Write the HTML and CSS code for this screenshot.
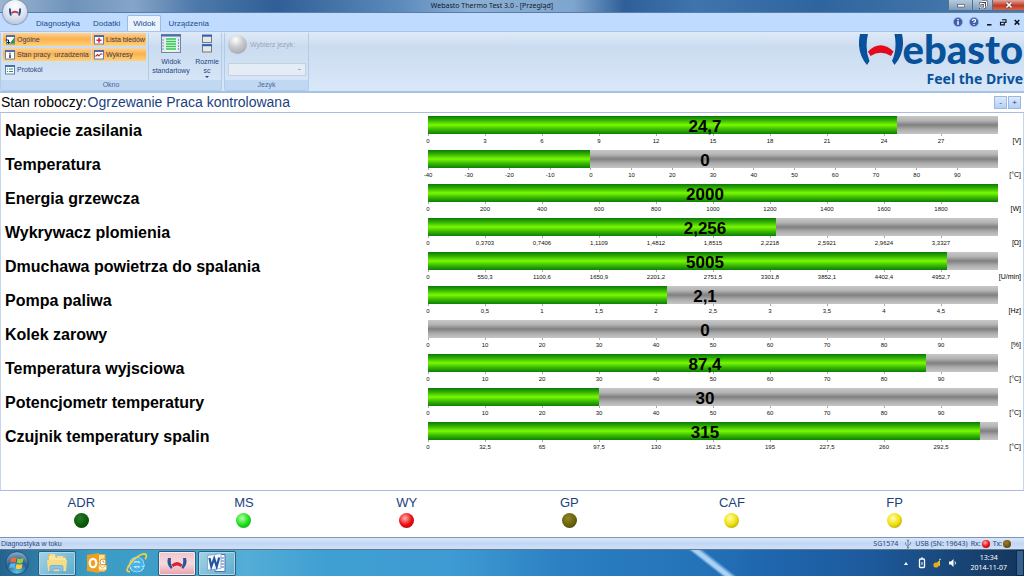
FILE: index.html
```html
<!DOCTYPE html>
<html lang="pl">
<head>
<meta charset="utf-8">
<meta name="viewport" content="width=device-width, initial-scale=1">
<title>Webasto Thermo Test 3.0 - [Przegląd]</title>
<link rel="stylesheet" href="styles.css">
</head>
<body>
<header class="titlebar">
  <h1 class="window-title">Webasto Thermo Test 3.0 - [Przegląd]</h1>
  <div class="window-buttons">
    <button class="win-btn" aria-label="Minimalizuj"><svg viewBox="0 0 12 10" width="12" height="10"><rect x="2.500" y="4.500" width="7" height="2.500" fill="#fff" stroke="#445" stroke-width=".6"/></svg></button>
    <button class="win-btn" aria-label="Przywróć"><svg viewBox="0 0 12 10" width="12" height="10"><path d="M5 1.500h4.500v4.500M3 3.500h4.500v4.500H3z" fill="none" stroke="#445" stroke-width="2"/><path d="M5 1.500h4.500v4.500M3 3.500h4.500v4.500H3z" fill="none" stroke="#fff" stroke-width="1"/></svg></button>
    <button class="win-btn win-close" aria-label="Zamknij"><svg viewBox="0 0 12 10" width="12" height="10"><path d="M3.500 2.500l5 5M8.500 2.500l-5 5" stroke="#533" stroke-width="2.800"/><path d="M3.500 2.500l5 5M8.500 2.500l-5 5" stroke="#fff" stroke-width="1.700"/></svg></button>
  </div>
</header>
<button class="app-orb" aria-label="Menu"><svg viewBox="0 0 24 24" width="24" height="24"><path d="M7 8.500q-.5 3.500 1 7M17 8.500q.5 3.500-1 7" fill="none" stroke="#274a86" stroke-width="1.900"/><path d="M8.500 13q3.500-2.600 7 0" fill="none" stroke="#c9373f" stroke-width="2"/></svg></button>
<nav class="tabs">
  <button class="tab">Diagnostyka</button>
  <button class="tab">Dodatki</button>
  <button class="tab tab-active">Widok</button>
  <button class="tab">Urządzenia</button>
  <div class="tab-tools">
    <button class="tool" aria-label="Informacje"><svg viewBox="0 0 10 10" width="10" height="10"><circle cx="5" cy="5" r="4.600" fill="#3d5eae" stroke="#9db2dd" stroke-width=".8"/><path d="M5 4.200v3.600M5 1.900v1.400" stroke="#fff" stroke-width="1.500"/></svg></button>
    <button class="tool" aria-label="Pomoc"><svg viewBox="0 0 10 10" width="10" height="10"><circle cx="5" cy="5" r="4.600" fill="#3d5eae" stroke="#9db2dd" stroke-width=".8"/><path d="M3.400 3.900q0-1.600 1.600-1.600t1.600 1.400q0 .9-1.600 1.700v.6M5 6.900v1.200" fill="none" stroke="#fff" stroke-width="1.200"/></svg></button>
    <button class="tool" aria-label="Minimalizuj okno"><svg viewBox="0 0 8 8" width="8" height="8"><path d="M2 6.800h4.500" stroke="#111" stroke-width="1.500"/></svg></button>
    <button class="tool" aria-label="Przywróć okno"><svg viewBox="0 0 8 8" width="8" height="8"><path d="M3 1.700h4v2.800H6M1.500 4.200h3.800v2.700H1.500z" fill="none" stroke="#111" stroke-width="1.100"/></svg></button>
    <button class="tool" aria-label="Zamknij okno"><svg viewBox="0 0 8 8" width="8" height="8"><path d="M1.700 2l4.600 4.600M6.300 2L1.700 6.600" stroke="#111" stroke-width="1.500"/></svg></button>
  </div>
</nav>
<section class="ribbon">
  <div class="group">
    <div class="group-body">
      <div class="toggles">
        <button class="toggle toggle-on"><svg viewBox="0 0 10 10" width="10" height="10"><rect x="1.500" y=".5" width="8" height="8.500" fill="#fff" stroke="#6580b0"/><path d="M1 1.200h9" stroke="#3b63b5" stroke-width="1.500"/><path d="M4.500 8.500L9 3v5.500z" fill="#299a35"/><path d="M.5 5h3v3.500M2 7l1.500 1.500L5 7" stroke="#123" fill="none"/></svg>Ogólne</button>
        <button class="toggle toggle-on"><svg viewBox="0 0 10 10" width="10" height="10"><rect x=".5" y=".5" width="9" height="8.500" fill="#fff" stroke="#6580b0"/><path d="M0 1.200h10" stroke="#3b63b5" stroke-width="1.500"/><path d="M5 2.800v5M2.500 5.300h5" stroke="#d1272d" stroke-width="1.500"/></svg>Lista bledów</button>
        <button class="toggle toggle-on"><svg viewBox="0 0 10 10" width="10" height="10"><rect x=".5" y=".5" width="9" height="8.500" fill="#fff" stroke="#6580b0"/><path d="M0 1.200h10" stroke="#3b63b5" stroke-width="1.500"/><path d="M5 4.500v3.500M5 2.700v1" stroke="#123" stroke-width="1.400"/></svg>Stan pracy&nbsp; urzadzenia</button>
        <button class="toggle toggle-on"><svg viewBox="0 0 10 10" width="10" height="10"><rect x=".5" y=".5" width="9" height="8.500" fill="#fff" stroke="#6580b0"/><path d="M0 1.200h10" stroke="#3b63b5" stroke-width="1.500"/><path d="M1.500 6.500l2-2 1.500 1.500 1.500-2 2 0" stroke="#c1272d" fill="none" stroke-width="1.100"/></svg>Wykresy</button>
        <button class="toggle"><svg viewBox="0 0 10 10" width="10" height="10"><rect x=".5" y=".5" width="9" height="8.500" fill="#fff" stroke="#6580b0"/><path d="M0 1.200h10" stroke="#3b63b5" stroke-width="1.500"/><path d="M2 4h1M4 4h4M2 6.500h1M4 6.500h4" stroke="#299a55"/></svg>Protokól</button>
      </div>
      <button class="big-btn"><svg viewBox="0 0 20 19" width="20" height="19"><rect x=".5" y=".5" width="19" height="18" fill="#dfe8f4" stroke="#7587a5"/><path d="M0 1.500h20" stroke="#4b6dad" stroke-width="2"/><rect x="4.500" y="3.500" width="11" height="14" fill="#e9fbe9"/><path d="M5 5h10M5 7.500h10M5 10h10M5 12.500h10M5 15h10" stroke="#35c455" stroke-width="1.700"/><path d="M2 5v11M17.500 5v11" stroke="#8c99ae" stroke-dasharray="2 1"/></svg><span>Widok<br>standartowy</span></button>
      <button class="big-btn big-btn-narrow"><svg viewBox="0 0 12 19" width="12" height="19"><rect x="1.500" y="1" width="9" height="7.500" fill="#e8e9dc" stroke="#6c7a94"/><path d="M1 1.800h10" stroke="#2f5fc0" stroke-width="1.800"/><rect x="1.500" y="10.500" width="9" height="7.500" fill="#e8e9dc" stroke="#6c7a94"/><path d="M1 11.300h10" stroke="#2f5fc0" stroke-width="1.800"/></svg><span>Rozmie<br>sc</span><i class="arrow"></i></button>
    </div>
    <div class="group-title">Okno</div>
  </div>
  <div class="group">
    <div class="group-body lang-body">
      <label class="lang-label" for="lang"><span class="globe"></span>Wybierz jezyk:</label>
      <select class="lang-select" id="lang" disabled><option></option></select>
    </div>
    <div class="group-title">Jezyk</div>
  </div>
  <div class="brand">
    <div class="brand-name"><svg viewBox="0 0 44 34" width="44" height="34"><path d="M1 1H9Q5.500 16 10.500 28L8 32Q-3 19 1 1zM35.500 1H43Q47 19 35.500 32L33 28Q38.500 16 35.500 1z" fill="#08529c"/><path d="M9 18.500Q21.500 6 34.500 18.500L32 23Q21.500 16.500 11.500 23z" fill="#e5091d"/></svg><span>ebasto</span></div>
    <div class="brand-claim">Feel the Drive</div>
  </div>
</section>
<div class="state">
  <p class="state-text"><span>Stan roboczy:</span><span class="state-value">Ogrzewanie Praca kontrolowana</span></p>
  <div class="zoom-buttons"><button class="zoom-btn">-</button><button class="zoom-btn">+</button></div>
</div>
<main class="gauges">
  <div class="gauge"><span class="name">Napiecie zasilania</span><div><div class="bar"><div class="fill" style="width:82.3%"></div><span class="value">24,7</span></div><div class="scale"><span>0</span><span>3</span><span>6</span><span>9</span><span>12</span><span>15</span><span>18</span><span>21</span><span>24</span><span>27</span></div></div><span class="unit">[V]</span></div>
  <div class="gauge"><span class="name">Temperatura</span><div><div class="bar"><div class="fill" style="width:28.5%"></div><span class="value">0</span></div><div class="scale scale-14"><span>-40</span><span>-30</span><span>-20</span><span>-10</span><span>0</span><span>10</span><span>20</span><span>30</span><span>40</span><span>50</span><span>60</span><span>70</span><span>80</span><span>90</span></div></div><span class="unit">[°C]</span></div>
  <div class="gauge"><span class="name">Energia grzewcza</span><div><div class="bar"><div class="fill" style="width:100%"></div><span class="value">2000</span></div><div class="scale"><span>0</span><span>200</span><span>400</span><span>600</span><span>800</span><span>1000</span><span>1200</span><span>1400</span><span>1600</span><span>1800</span></div></div><span class="unit">[W]</span></div>
  <div class="gauge"><span class="name">Wykrywacz plomienia</span><div><div class="bar"><div class="fill" style="width:61%"></div><span class="value">2,256</span></div><div class="scale"><span>0</span><span>0,3703</span><span>0,7406</span><span>1,1109</span><span>1,4812</span><span>1,8515</span><span>2,2218</span><span>2,5921</span><span>2,9624</span><span>3,3327</span></div></div><span class="unit">[Ω]</span></div>
  <div class="gauge"><span class="name">Dmuchawa powietrza do spalania</span><div><div class="bar"><div class="fill" style="width:91%"></div><span class="value">5005</span></div><div class="scale"><span>0</span><span>550,3</span><span>1100,6</span><span>1650,9</span><span>2201,2</span><span>2751,5</span><span>3301,8</span><span>3852,1</span><span>4402,4</span><span>4952,7</span></div></div><span class="unit">[U/min]</span></div>
  <div class="gauge"><span class="name">Pompa paliwa</span><div><div class="bar"><div class="fill" style="width:42%"></div><span class="value">2,1</span></div><div class="scale"><span>0</span><span>0,5</span><span>1</span><span>1,5</span><span>2</span><span>2,5</span><span>3</span><span>3,5</span><span>4</span><span>4,5</span></div></div><span class="unit">[Hz]</span></div>
  <div class="gauge"><span class="name">Kolek zarowy</span><div><div class="bar"><div class="fill" style="width:0%"></div><span class="value">0</span></div><div class="scale"><span>0</span><span>10</span><span>20</span><span>30</span><span>40</span><span>50</span><span>60</span><span>70</span><span>80</span><span>90</span></div></div><span class="unit">[%]</span></div>
  <div class="gauge"><span class="name">Temperatura wyjsciowa</span><div><div class="bar"><div class="fill" style="width:87.4%"></div><span class="value">87,4</span></div><div class="scale"><span>0</span><span>10</span><span>20</span><span>30</span><span>40</span><span>50</span><span>60</span><span>70</span><span>80</span><span>90</span></div></div><span class="unit">[°C]</span></div>
  <div class="gauge"><span class="name">Potencjometr temperatury</span><div><div class="bar"><div class="fill" style="width:30%"></div><span class="value">30</span></div><div class="scale"><span>0</span><span>10</span><span>20</span><span>30</span><span>40</span><span>50</span><span>60</span><span>70</span><span>80</span><span>90</span></div></div><span class="unit">[°C]</span></div>
  <div class="gauge"><span class="name">Czujnik temperatury spalin</span><div><div class="bar"><div class="fill" style="width:96.9%"></div><span class="value">315</span></div><div class="scale"><span>0</span><span>32,5</span><span>65</span><span>97,5</span><span>130</span><span>162,5</span><span>195</span><span>227,5</span><span>260</span><span>292,5</span></div></div><span class="unit">[°C]</span></div>
</main>
<section class="leds">
  <div class="led-item">ADR<i class="led led-darkgreen"></i></div>
  <div class="led-item">MS<i class="led led-green"></i></div>
  <div class="led-item">WY<i class="led led-red"></i></div>
  <div class="led-item">GP<i class="led led-olive"></i></div>
  <div class="led-item">CAF<i class="led led-yellow"></i></div>
  <div class="led-item">FP<i class="led led-yellow"></i></div>
</section>
<footer class="statusbar">
  <span class="diag">Diagnostyka w toku</span>
  <span class="serial">SG1574</span>
  <svg viewBox="0 0 8 10" width="8" height="10"><path d="M4 1v8M4 7.500L1.500 5.500V3.500M4 6.500l2.500-1.500V3" fill="none" stroke="#6f7f9d" stroke-width=".9"/><circle cx="4" cy="8.800" r="1" fill="#6f7f9d"/><path d="M2.700 2.200L4 0l1.300 2.200z" fill="#6f7f9d"/></svg>
  <span>USB (SN: 19643)</span><span class="io">Rx: <i class="led led-small led-red"></i></span><span class="io">Tx: <i class="led led-small led-brown"></i></span>
</footer>
<div class="taskbar">
  <button class="start" aria-label="Start"><svg viewBox="0 0 24 24" width="24" height="24"><defs><radialGradient id="orb" cx=".5" cy=".9" r=".9"><stop offset="0" stop-color="#5cc4ea"/><stop offset=".55" stop-color="#28628f"/><stop offset="1" stop-color="#8fb1c8"/></radialGradient></defs><circle cx="12" cy="12" r="11.300" fill="url(#orb)" stroke="#1b4565" stroke-width=".8"/><path d="M6 7.500q3-1.800 5.500-.5l-.8 4.500q-2.500-1-5.500.4z" fill="#ee6b35"/><path d="M12.500 7.300q3 1.400 6-.2l-.9 4.700q-3 1.400-5.900 0z" fill="#9ccb3b"/><path d="M5 13q3-1.400 5.500-.4l-.8 4.400q-2.500-1-5.500.4z" fill="#5bb4ee"/><path d="M11.500 12.900q3 1.300 5.900 0l-.9 4.500q-2.900 1.400-5.800 0z" fill="#fcd03d"/></svg></button>
  <button class="task task-framed" aria-label="Eksplorator"><svg viewBox="0 0 22 20" width="22" height="20"><path d="M2 1h7l1 2h9v15H2z" fill="#dfc05c"/><path d="M3 3h6l1 2h10v13H3z" fill="#f7e6a0"/><path d="M1 7h20l-1 11H2z" fill="#f5dc87"/><path d="M4 2h5M11 4h6" stroke="#fffbe0"/><path d="M4 19v-5q0-1.500 1.500-1.500h10q1.500 0 1.500 1.500v5h-3v-3H7v3z" fill="#86c5ee" stroke="#5a9ccc" stroke-width=".6"/></svg></button>
  <button class="task" aria-label="Outlook"><svg viewBox="0 0 22 20" width="22" height="20"><path d="M8 1.500h11v17H8z" fill="#fbe4a3" stroke="#eba62a"/><path d="M1 2l12-2v20L1 18z" fill="#eda01f"/><ellipse cx="7" cy="10" rx="3.300" ry="4.200" fill="none" stroke="#fff" stroke-width="2.200"/><circle cx="17" cy="9" r="3" fill="#fff" stroke="#d99222"/><path d="M17 7.500V9h1.500" fill="none" stroke="#b87a20" stroke-width=".8"/><path d="M12.500 12h8v5h-8z" fill="#fff8df" stroke="#dca03c" stroke-width=".7"/><path d="M12.500 12l4 3 4-3" fill="none" stroke="#dca03c" stroke-width=".7"/></svg></button>
  <button class="task" aria-label="Internet Explorer"><svg viewBox="0 0 22 20" width="22" height="20"><path d="M16 13.700q-1.600 3.300-5.300 3.300-5-.4-5.200-5.600.5-5 5.400-5.200 5 .3 5.200 5.500H7" fill="none" stroke="#e2f5fe" stroke-width="4.600"/><path d="M16 13.700q-1.600 3.300-5.300 3.300-5-.4-5.200-5.600.5-5 5.400-5.200 5 .3 5.200 5.500H7" fill="none" stroke="#45b4ea" stroke-width="3.300"/><path d="M4 18.500q-4 .5-2.500-3Q3 11 9 5.500 16.500 0 19.500 1.200q1.800 1.300-.3 5" fill="none" stroke="#f3cf45" stroke-width="1.800"/></svg></button>
  <button class="task task-framed task-active" aria-label="Webasto Thermo Test"><svg viewBox="0 0 22 20" width="22" height="20"><path d="M2 5h3q-1 5 1.500 9.500L5 16Q0 11 2 5zM17 5h3q2 6-3 11l-1.500-1.500Q18 10 17 5z" fill="#28579c"/><path d="M5.500 11.500q5.500-5 11 0L15 14q-4-3-8 0z" fill="#d92432"/></svg></button>
  <button class="task task-framed" aria-label="Word"><svg viewBox="0 0 22 20" width="22" height="20"><path d="M9 1.500h10v17H9z" fill="#fff" stroke="#4672b9"/><path d="M15 5h3M15 8h3M15 11h3M15 14h3" stroke="#4672b9"/><path d="M1.500 2.500L15 .5v15L1.500 17z" fill="#f4f8fd" stroke="#7998c9" stroke-width=".7"/><path d="M3.500 5l1.800 8.500L8.200 5.500l2.500 8L13.200 4.500" fill="none" stroke="#23549f" stroke-width="2.200"/></svg></button>
  <div class="tray">
    <i class="tray-up"></i>
    <svg viewBox="0 0 8 12" width="8" height="12"><rect x="1.500" y="2" width="5" height="8.500" rx="1" fill="none" stroke="#fff" stroke-width="1.300"/><path d="M3 1h2M4 5v3" stroke="#fff"/></svg>
    <svg viewBox="0 0 10 10" width="10" height="10"><path d="M2 7l6-5v6z" fill="#ddc12c"/><circle cx="4" cy="7" r="2.600" fill="#e7a723"/><path d="M7 2l2-1" stroke="#cdd"/></svg>
    <svg viewBox="0 0 10 10" width="10" height="10"><path d="M1 3.500h2L5.500 1v8L3 6.500H1z" fill="#fff"/><path d="M7 3.500q1 1.500 0 3" stroke="#dfeaf5" fill="none"/></svg>
  </div>
  <div class="clock"><time>13:34</time><time>2014-11-07</time></div>
  <button class="show-desktop" aria-label="Pokaż pulpit"></button>
</div>
</body>
</html>
```

FILE: styles.css
```css
* { box-sizing: border-box; }
html { height: 100%; }
body {
  margin: 0;
  min-height: 100%;
  display: flex;
  flex-direction: column;
  position: relative;
  background: #fff;
  font-family: "Liberation Sans", Arial, sans-serif;
  color: #000;
}
button {
  margin: 0;
  padding: 0;
  border: 0;
  background: none;
  font: inherit;
  color: inherit;
}
svg { display: block; flex: none; }
p, h1 { margin: 0; font-weight: normal; }

.titlebar {
  display: grid;
  grid-template-columns: 1fr auto 1fr;
  height: 13px;
  background: linear-gradient(90deg, #9bb5d2 0, #6f93bb 7%, #86a5c8 13%, #4e79aa 19%, #2f5f96 27%, #5b8abb 39%, #8db0d4 46%, #7ea5cd 56%, #2f5f98 61%, #3f74ad 68%, #2f659f 80%, #4d7fae 100%);
  border-bottom: 1px solid #5b7ca5;
}
.window-title {
  grid-column: 2;
  padding-right: 40px;
  font: 7px/11px "Noto Sans", "Open Sans", sans-serif;
  color: #0c1a2c;
}
.window-buttons { display: flex; justify-content: flex-end; height: 11px; }
.win-btn {
  width: 20px;
  display: flex;
  justify-content: center;
  background: linear-gradient(#b9cbdd, #7e9dbd);
  border: 1px solid #55708f;
  border-top: 0;
  border-right: 0;
}
.win-btn:first-child { width: 24px; }
.win-close { width: 32px; background: linear-gradient(#e0a79b, #c23a28 55%, #cf6a4b); }

.app-orb {
  position: absolute;
  left: 3px;
  top: 0;
  width: 24px;
  height: 24px;
  border-radius: 50%;
  background: radial-gradient(circle at 50% 25%, #fff, #dbe3ef 55%, #a9b8cf);
  box-shadow: 0 0 1px 1px #8294b3;
}

.tabs {
  display: flex;
  align-items: flex-end;
  height: 18px;
  padding: 0 3px 0 30px;
  background: #bfdbff;
  color: #234a8c;
  font-size: 8px;
  line-height: 15px;
}
.tab { padding: 0 5px; margin-right: 1px; border: 1px solid transparent; border-bottom: 0; }
.tab-active { background: #eaf3fe; border-color: #9bbbe3; border-radius: 2px 2px 0 0; }
.tab-tools { margin-left: auto; display: flex; align-items: center; gap: 6px; height: 18px; }

.ribbon {
  display: flex;
  height: 62px;
  gap: 2px;
  background: linear-gradient(#dfeaf7, #cbdcf0 25%, #d9e8f9);
  border-top: 1px solid #a9c4e6;
  border-bottom: 2px solid #a5c3e4;
  color: #26467e;
  font-size: 7px;
}
.group {
  display: flex;
  flex-direction: column;
  border: 1px solid #b2cbe9;
  border-top-color: #dce9f8;
  border-radius: 2px;
}
.group-body { flex: 1; display: flex; }
.group-title { background: #c1d8f2; text-align: center; line-height: 10px; color: #4367a0; }
.toggles {
  display: grid;
  grid-template-columns: 88px 54px;
  grid-auto-rows: 13px;
  align-content: start;
  gap: 2px 1px;
  padding: 0 2px;
  border-right: 1px solid #b2cbe9;
}
.toggle { display: flex; align-items: center; gap: 2px; padding-left: 2px; white-space: nowrap; }
.toggle-on { background: linear-gradient(#fbd397, #fdb04b 45%, #fed27d); color: #3a3d5c; }
.big-btn {
  display: flex;
  flex-direction: column;
  align-items: center;
  width: 44px;
  padding-top: 1px;
  gap: 4px;
  line-height: 9px;
  text-align: center;
}
.big-btn-narrow { width: 28px; }
.arrow { border: 2px solid transparent; border-top: 2px solid #26467e; margin-top: -3px; }
.lang-body { flex-direction: column; justify-content: space-between; padding: 2px 2px 4px 3px; }
.lang-label { display: flex; align-items: center; gap: 3px; color: #9aa6b8; }
.globe { width: 19px; height: 19px; border-radius: 50%; background: radial-gradient(circle at 40% 25%, #fff, #c4c7cb 45%, #989ca2); }
.lang-select {
  width: 78px;
  height: 13px;
  padding: 0 4px 0 0;
  appearance: none;
  border: 1px solid #c0c9d4;
  border-radius: 0;
  background: linear-gradient(#8f98a6, #8f98a6) no-repeat right 4px center / 3px 1px, #edf1f6;
  font-size: 7px;
}
.brand {
  margin-left: auto;
  padding-right: 1px;
  color: #08529c;
  font-family: "Noto Sans", "Open Sans", sans-serif;
  font-weight: 700;
  text-align: right;
}
.brand-name {
  display: flex;
  justify-content: flex-end;
  height: 37px;
  padding-top: 1px;
  font-family: Lato, "Open Sans", sans-serif;
  font-weight: 900;
  font-size: 40px;
  line-height: 33px;
}
.brand-claim { font-size: 14px; line-height: 20px; }

.state {
  display: flex;
  justify-content: space-between;
  align-items: center;
  height: 20px;
  padding: 0 3px 0 1px;
  border-bottom: 1px solid #a9bde0;
  font-size: 14px;
}
.state-text { display: flex; gap: 1px; line-height: 17px; }
.state-value { color: #1c3f80; }
.zoom-buttons { display: flex; gap: 1px; }
.zoom-btn {
  width: 13px;
  height: 13px;
  border: 1px solid #9cb8e0;
  background: linear-gradient(#dceafc, #b4d0f5);
  color: #1c3f80;
  font-size: 8px;
  line-height: 9px;
}

.gauges {
  flex: 1;
  padding: 3px 0 30px 4px;
  border-left: 1px solid #c5d5ee;
  border-right: 1px solid #c5d5ee;
}
.gauge {
  display: grid;
  grid-template-columns: 423fr 570fr 25px;
  height: 34px;
}
.name { font-size: 16px; font-weight: 700; line-height: 29px; white-space: nowrap; }
.bar {
  position: relative;
  height: 18px;
  background: linear-gradient(#c8c8c8, #b4b4b4 25%, #808080 50%, #acacac 75%, #c6c6c6);
}
.fill { height: 100%; background: linear-gradient(#0b7a06, #2da904 20%, #78fa02 50%, #38b703 75%, #0b7f06); }
.value {
  position: absolute;
  inset: 0;
  padding-right: 16px;
  text-align: center;
  font-size: 17px;
  font-weight: 700;
  line-height: 21px;
}
.scale { display: flex; margin: 0 5% 0 -5%; font-size: 6px; line-height: 11px; color: #111; }
.scale-14 { margin: 0 calc(50% / 14) 0 calc(-50% / 14); }
.scale span { flex: 1 1 0; min-width: 0; text-align: center; white-space: nowrap; }
.scale span::before { content: ""; display: block; width: 1px; height: 2px; margin: 0 auto; background: #aaa; }
.unit {
  justify-self: end;
  padding-right: 2px;
  font-size: 7px;
  line-height: 49px;
  white-space: nowrap;
}

.leds {
  display: grid;
  grid-template-columns: repeat(6, 1fr);
  height: 47px;
  padding: 4px 48px 0 0;
  border-top: 1px solid #a9bde0;
  color: #1c3f80;
  font-size: 13px;
  line-height: 15px;
}
.led-item { display: flex; flex-direction: column; align-items: center; gap: 3px; }
.led { width: 15px; height: 15px; border-radius: 50%; }
.led-darkgreen { background: radial-gradient(circle at 40% 35%, #2c7a2a, #0c5c0c 50%, #083808); }
.led-green { background: radial-gradient(circle at 40% 35%, #b4ffac, #20e01c 50%, #0b8f0b); }
.led-red { background: radial-gradient(circle at 40% 35%, #ffb4b0, #ee0e12 50%, #8f0808); }
.led-olive { background: radial-gradient(circle at 40% 35%, #8e8728, #6b6508 50%, #3d3a10); }
.led-yellow { background: radial-gradient(circle at 40% 35%, #ffffb0, #efe00c 50%, #958a08); }
.led-brown { background: radial-gradient(circle at 40% 35%, #9c7a30, #6d5010 60%, #4a360c); }
.led-small { display: inline-block; width: 8px; height: 8px; }

.statusbar {
  display: flex;
  align-items: center;
  gap: 3px;
  height: 13px;
  padding: 0 13px 0 1px;
  border-top: 1px solid #7c94b8;
  border-bottom: 1px solid #5c7890;
  background: linear-gradient(#dbe7f9, #c2d6f3 50%, #cfe0f7);
  color: #2c4a80;
  font-family: "Noto Sans", "Open Sans", sans-serif;
  font-size: 7px;
}
.diag { margin-right: auto; font-family: "Liberation Sans", Arial, sans-serif; }
.serial { padding-right: 3px; }
.io { display: flex; align-items: center; gap: 1px; }

.taskbar {
  display: flex;
  align-items: center;
  gap: 1px;
  height: 26px;
  padding-left: 5px;
  background:
    linear-gradient(38deg, transparent 46%, #a9d2f4 49%, #a9d2f4 52%, transparent 56%) no-repeat 72% 0 / 120px 100%,
    linear-gradient(90deg, #24638f 0, #2f7fa8 4%, #3b9cc4 9%, #3f9fca 18%, #54add6 24%, #3f9fd2 32%, #3f9bd3 44%, #2b7fc2 55%, #2473b8 68%, #1f66ae 75%, #1d5a9c 85%, #173f6c 96%, #12355c 100%);
}
.start { width: 24px; margin-right: 8px; }
.task {
  width: 38px;
  height: 25px;
  display: flex;
  align-items: center;
  justify-content: center;
  margin-right: 1px;
  border: 1px solid transparent;
  border-radius: 2px;
}
.task-framed { border-color: #275f7c; background: linear-gradient(135deg, #a4d3e6, #5eaccc); box-shadow: inset 0 0 0 1px #a9d8ea; }
.task-active { background: linear-gradient(#f2c3cb, #f6d9de 50%, #eb9eaa); box-shadow: inset 0 0 0 1px #fbe6ea; }
.tray { margin-left: auto; display: flex; align-items: center; gap: 6px; }
.tray-up { border: 2px solid transparent; border-bottom: 3px solid #fff; border-top: 0; margin-right: 4px; }
.clock {
  display: flex;
  flex-direction: column;
  align-items: center;
  padding: 0 8px 0 11px;
  color: #fff;
  font: 7px/10px "Noto Sans", "Open Sans", sans-serif;
}
.show-desktop { width: 8px; height: 26px; border: 1px solid #0e2a49; background: #35618f; }
```
